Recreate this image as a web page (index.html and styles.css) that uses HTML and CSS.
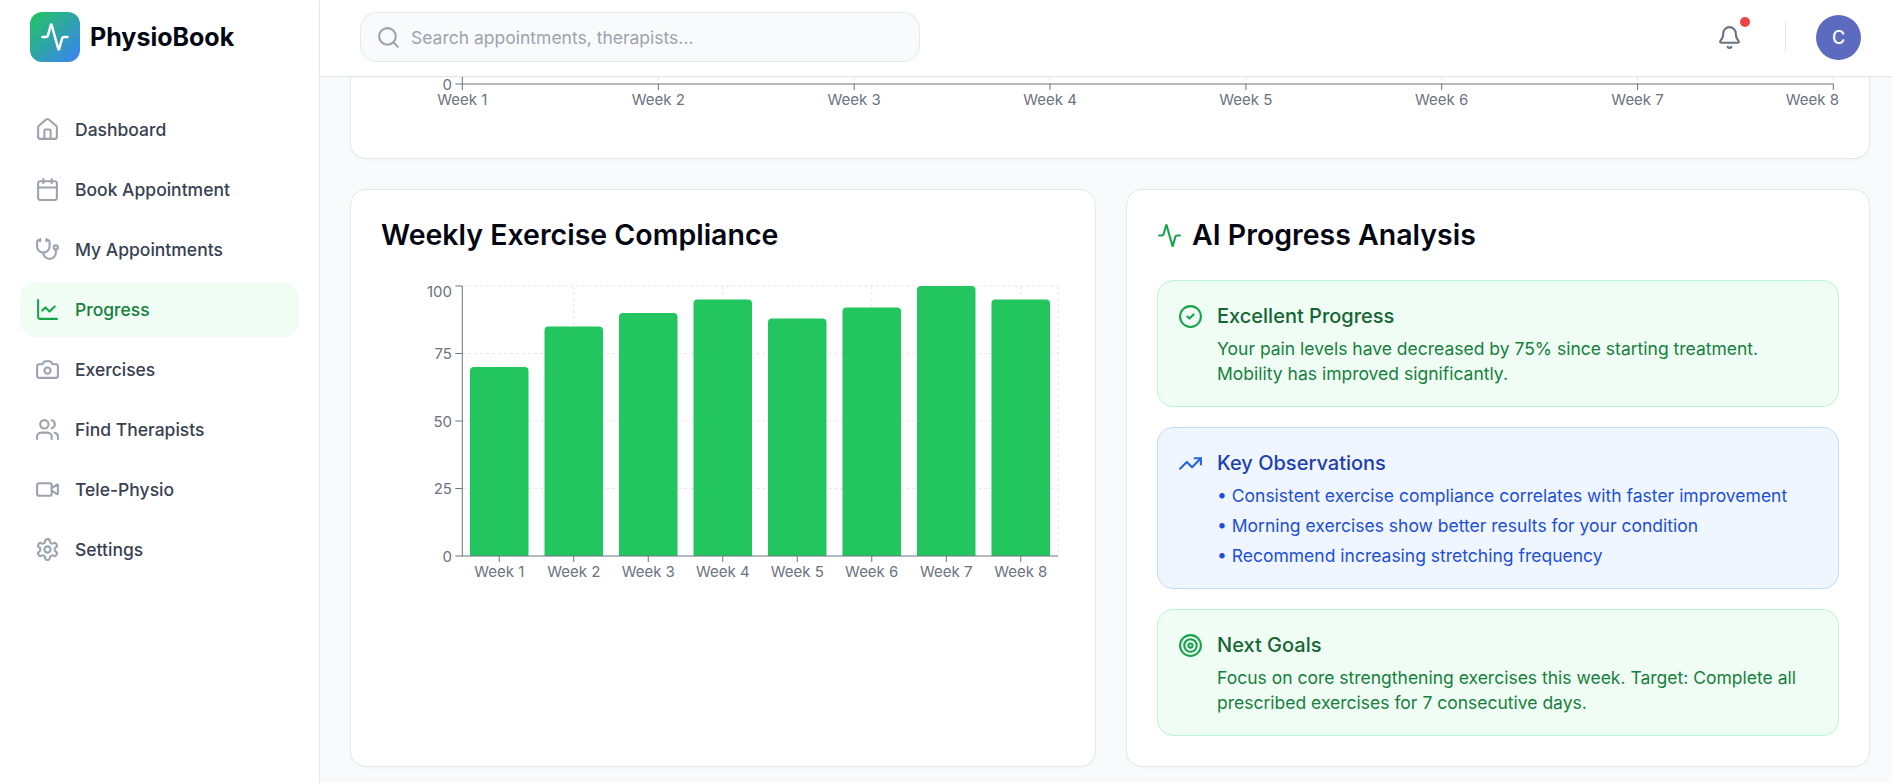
FILE: index.html
```html
<!DOCTYPE html>
<html lang="en">
<head>
<meta charset="utf-8">
<title>PhysioBook</title>
<link rel="stylesheet" href="styles.css">
</head>
<body>
<div class="app">
  <aside class="sidebar">
    <div class="brand">
      <div class="brand-mark">
        <svg class="ico-30" viewBox="0 0 24 24"><path d="M22 12h-2.48a2 2 0 0 0-1.93 1.46l-2.35 8.36a.25.25 0 0 1-.48 0L9.24 2.18a.25.25 0 0 0-.48 0l-2.35 8.36A2 2 0 0 1 4.49 12H2"/></svg>
      </div>
      <span class="brand-name">PhysioBook</span>
    </div>
    <nav class="nav">
      <a class="nav-item"><svg class="ico" viewBox="0 0 24 24"><path d="M15 21v-8a1 1 0 0 0-1-1h-4a1 1 0 0 0-1 1v8"/><path d="M3 10a2 2 0 0 1 .709-1.528l7-5.999a2 2 0 0 1 2.582 0l7 5.999A2 2 0 0 1 21 10v9a2 2 0 0 1-2 2H5a2 2 0 0 1-2-2z"/></svg>Dashboard</a>
      <a class="nav-item"><svg class="ico" viewBox="0 0 24 24"><path d="M8 2v4"/><path d="M16 2v4"/><rect x="3" y="4" width="18" height="18" rx="2"/><path d="M3 10h18"/></svg>Book Appointment</a>
      <a class="nav-item"><svg class="ico" viewBox="0 0 24 24"><path d="M11 2v2"/><path d="M5 2v2"/><path d="M5 3H4a2 2 0 0 0-2 2v4a6 6 0 0 0 12 0V5a2 2 0 0 0-2-2h-1"/><path d="M8 15a6 6 0 0 0 12 0v-3"/><circle cx="20" cy="10" r="2"/></svg>My Appointments</a>
      <a class="nav-item active"><svg class="ico" viewBox="0 0 24 24"><path d="M3 3v16a2 2 0 0 0 2 2h16"/><path d="m19 9-5 5-4-4-3 3"/></svg>Progress</a>
      <a class="nav-item"><svg class="ico" viewBox="0 0 24 24"><path d="M14.5 4h-5L7 7H4a2 2 0 0 0-2 2v9a2 2 0 0 0 2 2h16a2 2 0 0 0 2-2V9a2 2 0 0 0-2-2h-3l-2.5-3z"/><circle cx="12" cy="13" r="3"/></svg>Exercises</a>
      <a class="nav-item"><svg class="ico" viewBox="0 0 24 24"><path d="M16 21v-2a4 4 0 0 0-4-4H6a4 4 0 0 0-4 4v2"/><circle cx="9" cy="7" r="4"/><path d="M22 21v-2a4 4 0 0 0-3-3.87"/><path d="M16 3.13a4 4 0 0 1 0 7.75"/></svg>Find Therapists</a>
      <a class="nav-item"><svg class="ico" viewBox="0 0 24 24"><path d="m16 13 5.223 3.482a.5.5 0 0 0 .777-.416V7.87a.5.5 0 0 0-.752-.432L16 10.5"/><rect x="2" y="6" width="14" height="12" rx="2"/></svg>Tele-Physio</a>
      <a class="nav-item"><svg class="ico" viewBox="0 0 24 24"><path d="M12.22 2h-.44a2 2 0 0 0-2 2v.18a2 2 0 0 1-1 1.73l-.43.25a2 2 0 0 1-2 0l-.15-.08a2 2 0 0 0-2.73.73l-.22.38a2 2 0 0 0 .73 2.73l.15.1a2 2 0 0 1 1 1.72v.51a2 2 0 0 1-1 1.74l-.15.09a2 2 0 0 0-.73 2.73l.22.38a2 2 0 0 0 2.73.73l.15-.08a2 2 0 0 1 2 0l.43.25a2 2 0 0 1 1 1.73V20a2 2 0 0 0 2 2h.44a2 2 0 0 0 2-2v-.18a2 2 0 0 1 1-1.73l.43-.25a2 2 0 0 1 2 0l.15.08a2 2 0 0 0 2.73-.73l.22-.39a2 2 0 0 0-.73-2.73l-.15-.08a2 2 0 0 1-1-1.74v-.5a2 2 0 0 1 1-1.74l.15-.09a2 2 0 0 0 .73-2.73l-.22-.38a2 2 0 0 0-2.73-.73l-.15.08a2 2 0 0 1-2 0l-.43-.25a2 2 0 0 1-1-1.73V4a2 2 0 0 0-2-2z"/><circle cx="12" cy="12" r="3"/></svg>Settings</a>
    </nav>
  </aside>

  <div class="main">
    <header class="topbar">
      <div class="search">
        <svg class="ico search-ico" viewBox="0 0 24 24"><path d="m21 21-4.34-4.34"/><circle cx="11" cy="11" r="8"/></svg>
        <span class="search-text">Search appointments, therapists...</span>
      </div>
      <div class="top-actions">
        <div class="bell">
          <svg class="ico bell-ico" viewBox="0 0 24 24"><path d="M10.268 21a2 2 0 0 0 3.464 0"/><path d="M3.262 15.326A1 1 0 0 0 4 17h16a1 1 0 0 0 .74-1.673C19.41 13.956 18 12.499 18 8A6 6 0 0 0 6 8c0 4.499-1.411 5.956-2.738 7.326"/></svg>
          <span class="bell-dot"></span>
        </div>
        <span class="divider"></span>
        <div class="avatar">C</div>
      </div>
    </header>

    <div class="content">
      <section class="card card-clipped">
        <svg class="chart-top" viewBox="0 0 1458 80" width="1458" height="80">
          <g class="grid">
            <path d="M277.3 0V7M473.2 0V7M669 0V7M864.9 0V7M1060.7 0V7M1256.6 0V7M1452.3 0V7"/>
          </g>
          <g class="axis">
            <path d="M81.3 7H1452.3"/>
            <path d="M81.3 0V13"/>
            <path d="M74.3 7H81.3"/>
            <path d="M277.3 7V13M473.2 7V13M669 7V13M864.9 7V13M1060.7 7V13M1256.6 7V13M1452.3 7V13"/>
          </g>
          <g class="ticks">
            <text x="71" y="12.5" text-anchor="end">0</text>
            <text x="81.3" y="27.5" text-anchor="middle">Week 1</text>
            <text x="277.3" y="27.5" text-anchor="middle">Week 2</text>
            <text x="473.2" y="27.5" text-anchor="middle">Week 3</text>
            <text x="669" y="27.5" text-anchor="middle">Week 4</text>
            <text x="864.9" y="27.5" text-anchor="middle">Week 5</text>
            <text x="1060.7" y="27.5" text-anchor="middle">Week 6</text>
            <text x="1256.6" y="27.5" text-anchor="middle">Week 7</text>
            <text x="1458" y="27.5" text-anchor="end">Week 8</text>
          </g>
        </svg>
      </section>

      <div class="columns">
        <section class="card panel">
          <h2 class="panel-title">Weekly Exercise Compliance</h2>
          <svg class="chart-bars" viewBox="0 0 683 310" width="683" height="310">
            <g class="grid">
              <path d="M81.3 6H677.3M81.3 73.5H677.3M81.3 141H677.3M81.3 208.5H677.3"/>
              <path d="M192.75 6V276M341.75 6V276M490.75 6V276M639.75 6V276M677.3 6V276"/>
            </g>
            <g class="bars">
              <path d="M89 276V91a4 4 0 0 1 4-4h50.5a4 4 0 0 1 4 4V276z"/>
              <path d="M163.5 276V50.5a4 4 0 0 1 4-4H218a4 4 0 0 1 4 4V276z"/>
              <path d="M238 276V37a4 4 0 0 1 4-4h50.5a4 4 0 0 1 4 4V276z"/>
              <path d="M312.5 276V23.500a4 4 0 0 1 4-4H367a4 4 0 0 1 4 4V276z"/>
              <path d="M387 276V42.400a4 4 0 0 1 4-4h50.500a4 4 0 0 1 4 4V276z"/>
              <path d="M461.500 276V31.600a4 4 0 0 1 4-4H516a4 4 0 0 1 4 4V276z"/>
              <path d="M536 276V10a4 4 0 0 1 4-4h50.500a4 4 0 0 1 4 4V276z"/>
              <path d="M610.500 276V23.500a4 4 0 0 1 4-4H665a4 4 0 0 1 4 4V276z"/>
            </g>
            <g class="axis">
              <path d="M81.300 6V276H677.300"/>
              <path d="M74.300 6H81.300M74.300 73.500H81.300M74.300 141H81.300M74.300 208.500H81.300M74.300 276H81.300"/>
              <path d="M118.250 276V282M192.750 276V282M267.250 276V282M341.750 276V282M416.250 276V282M490.750 276V282M565.250 276V282M639.750 276V282"/>
            </g>
            <g class="ticks">
              <text x="71" y="17.200" text-anchor="end">100</text>
              <text x="71" y="79" text-anchor="end">75</text>
              <text x="71" y="146.500" text-anchor="end">50</text>
              <text x="71" y="214" text-anchor="end">25</text>
              <text x="71" y="281.500" text-anchor="end">0</text>
              <text x="118.250" y="296.500" text-anchor="middle">Week 1</text>
              <text x="192.750" y="296.500" text-anchor="middle">Week 2</text>
              <text x="267.250" y="296.500" text-anchor="middle">Week 3</text>
              <text x="341.750" y="296.500" text-anchor="middle">Week 4</text>
              <text x="416.250" y="296.500" text-anchor="middle">Week 5</text>
              <text x="490.750" y="296.500" text-anchor="middle">Week 6</text>
              <text x="565.250" y="296.500" text-anchor="middle">Week 7</text>
              <text x="639.750" y="296.500" text-anchor="middle">Week 8</text>
            </g>
          </svg>
        </section>

        <section class="card panel">
          <h2 class="panel-title with-icon">
            <svg class="ico ico-heading" viewBox="0 0 24 24"><path d="M22 12h-2.48a2 2 0 0 0-1.93 1.46l-2.35 8.36a.25.25 0 0 1-.48 0L9.24 2.18a.25.25 0 0 0-.48 0l-2.35 8.36A2 2 0 0 1 4.49 12H2"/></svg>
            AI Progress Analysis
          </h2>
          <div class="insights">
            <article class="insight green">
              <svg class="ico insight-ico" viewBox="0 0 24 24"><circle cx="12" cy="12" r="10"/><path d="m9 12 2 2 4-4"/></svg>
              <div>
                <h3 class="insight-title">Excellent Progress</h3>
                <p class="insight-text">Your pain levels have decreased by 75% since starting treatment. Mobility has improved significantly.</p>
              </div>
            </article>
            <article class="insight blue">
              <svg class="ico insight-ico" viewBox="0 0 24 24"><path d="M16 7h6v6"/><path d="m22 7-8.5 8.5-5-5L2 17"/></svg>
              <div>
                <h3 class="insight-title">Key Observations</h3>
                <ul class="insight-list">
                  <li>• Consistent exercise compliance correlates with faster improvement</li>
                  <li>• Morning exercises show better results for your condition</li>
                  <li>• Recommend increasing stretching frequency</li>
                </ul>
              </div>
            </article>
            <article class="insight green">
              <svg class="ico insight-ico" viewBox="0 0 24 24"><circle cx="12" cy="12" r="10"/><circle cx="12" cy="12" r="6"/><circle cx="12" cy="12" r="2"/></svg>
              <div>
                <h3 class="insight-title">Next Goals</h3>
                <p class="insight-text">Focus on core strengthening exercises this week. Target: Complete all prescribed exercises for 7 consecutive days.</p>
              </div>
            </article>
          </div>
        </section>
      </div>
    </div>
  </div>
</div>
</body>
</html>
```

FILE: styles.css
```css
* { box-sizing: border-box; }
html, body { margin: 0; height: 100%; overflow: hidden; }
body { font-family: Inter, "Liberation Sans", sans-serif; background: #f9fafb; color: #111827; }
h2, h3, p, ul { margin: 0; padding: 0; }
ul { list-style: none; }

.app { display: flex; height: 783px; }

.ico, .ico-30 { fill: none; stroke: currentColor; stroke-width: 2; stroke-linecap: round; stroke-linejoin: round; flex: none; }
.ico { width: 25px; height: 25px; display: block; }
.ico-30 { width: 30px; height: 30px; color: #fff; }

.sidebar { width: 320px; flex: none; background: #fff; border-right: 1px solid #e5e7eb; padding: 12px 20px 0; }
.brand { display: flex; align-items: center; gap: 10px; padding-left: 10px; }
.brand-mark { width: 50px; height: 50px; border-radius: 12px; background: linear-gradient(135deg, #22c55e, #3b82f6); display: flex; align-items: center; justify-content: center; }
.brand-name { font-size: 25px; font-weight: 700; color: #030712; line-height: 36px; }

.nav { margin-top: 40px; display: flex; flex-direction: column; gap: 5px; }
.nav-item { height: 55px; border-radius: 16px; padding: 0 15px; display: flex; align-items: center; gap: 15px; font-size: 17.5px; font-weight: 500; color: #374151; }
.nav-item .ico { color: #9ca3af; }
.nav-item.active { background: #f0fdf4; color: #15803d; }
.nav-item.active .ico { color: #16a34a; }

.main { flex: 1; min-width: 0; display: flex; flex-direction: column; }

.topbar { height: 77px; flex: none; background: #fff; border-bottom: 1px solid #e5e7eb; box-shadow: 0 1px 2px rgba(0,0,0,.03); padding: 12px 31px 0 40px; display: flex; justify-content: space-between; align-items: flex-start; position: relative; z-index: 1; }
.search { width: 560px; height: 50px; border: 1px solid #e5e7eb; border-radius: 16px; background: #f9fafb; display: flex; align-items: center; gap: 10px; padding-left: 15px; }
.search-ico { color: #9ca3af; }
.search-text { font-size: 17.5px; color: #9ca3af; }
.top-actions { display: flex; align-items: center; height: 50px; }
.bell { position: relative; width: 25px; height: 25px; margin-right: 43px; color: #6b7280; }
.bell-dot { position: absolute; top: -8px; left: 23px; width: 10px; height: 10px; border-radius: 50%; background: #ef4444; }
.divider { width: 1px; height: 30px; background: #e5e7eb; margin-right: 30px; }
.avatar { width: 45px; height: 45px; border-radius: 50%; background: #5c6bc0; color: #fff; font-size: 18px; font-weight: 500; display: flex; align-items: center; justify-content: center; }

.content { flex: 1; min-height: 0; padding: 0 22px 0 30px; display: flex; flex-direction: column; gap: 30px; }
.card { background: #fff; border: 1px solid #e5e7eb; border-radius: 16px; box-shadow: 0 1px 2px rgba(0,0,0,.03); }
.card-clipped { height: 82px; flex: none; border-top: 0; border-radius: 0 0 16px 16px; padding-left: 30px; overflow: hidden; }

.chart-top, .chart-bars { display: block; }
.grid path { fill: none; stroke: #e2e8f0; stroke-width: 1; stroke-dasharray: 3 3; }
.axis path { fill: none; stroke: #6b7280; stroke-width: 1; }
.bars path { fill: #22c55e; }
.ticks text { font-family: Inter, sans-serif; font-size: 15px; fill: #6b7280; }

.columns { display: grid; grid-template-columns: 746px 1fr; gap: 30px; height: 578px; flex: none; }
.panel { padding: 30px; }
.panel-title { font-size: 28.5px; font-weight: 600; line-height: 30px; color: #030712; margin-bottom: 30px; }
.with-icon { display: flex; align-items: center; gap: 10px; }
.ico-heading { color: #16a34a; }

.insights { display: flex; flex-direction: column; gap: 20px; }
.insight { display: flex; gap: 14px; padding: 20px; border: 1px solid; border-radius: 16px; }
.insight-ico { margin-top: 3px; }
.insight-title { font-size: 20px; font-weight: 500; line-height: 30px; margin-bottom: 6px; }
.insight-text { font-size: 17.5px; line-height: 24.64px; }
.insight-list { display: flex; flex-direction: column; gap: 5px; font-size: 17.5px; line-height: 24.64px; }
.green { background: #f0fdf4; border-color: #bbf7d0; }
.green .insight-ico { color: #16a34a; }
.green .insight-title { color: #166534; }
.green .insight-text { color: #15803d; }
.blue { background: #eff6ff; border-color: #bfdbfe; }
.blue .insight-ico { color: #2563eb; }
.blue .insight-title { color: #1e40af; }
.blue .insight-list { color: #1d4ed8; }
```
